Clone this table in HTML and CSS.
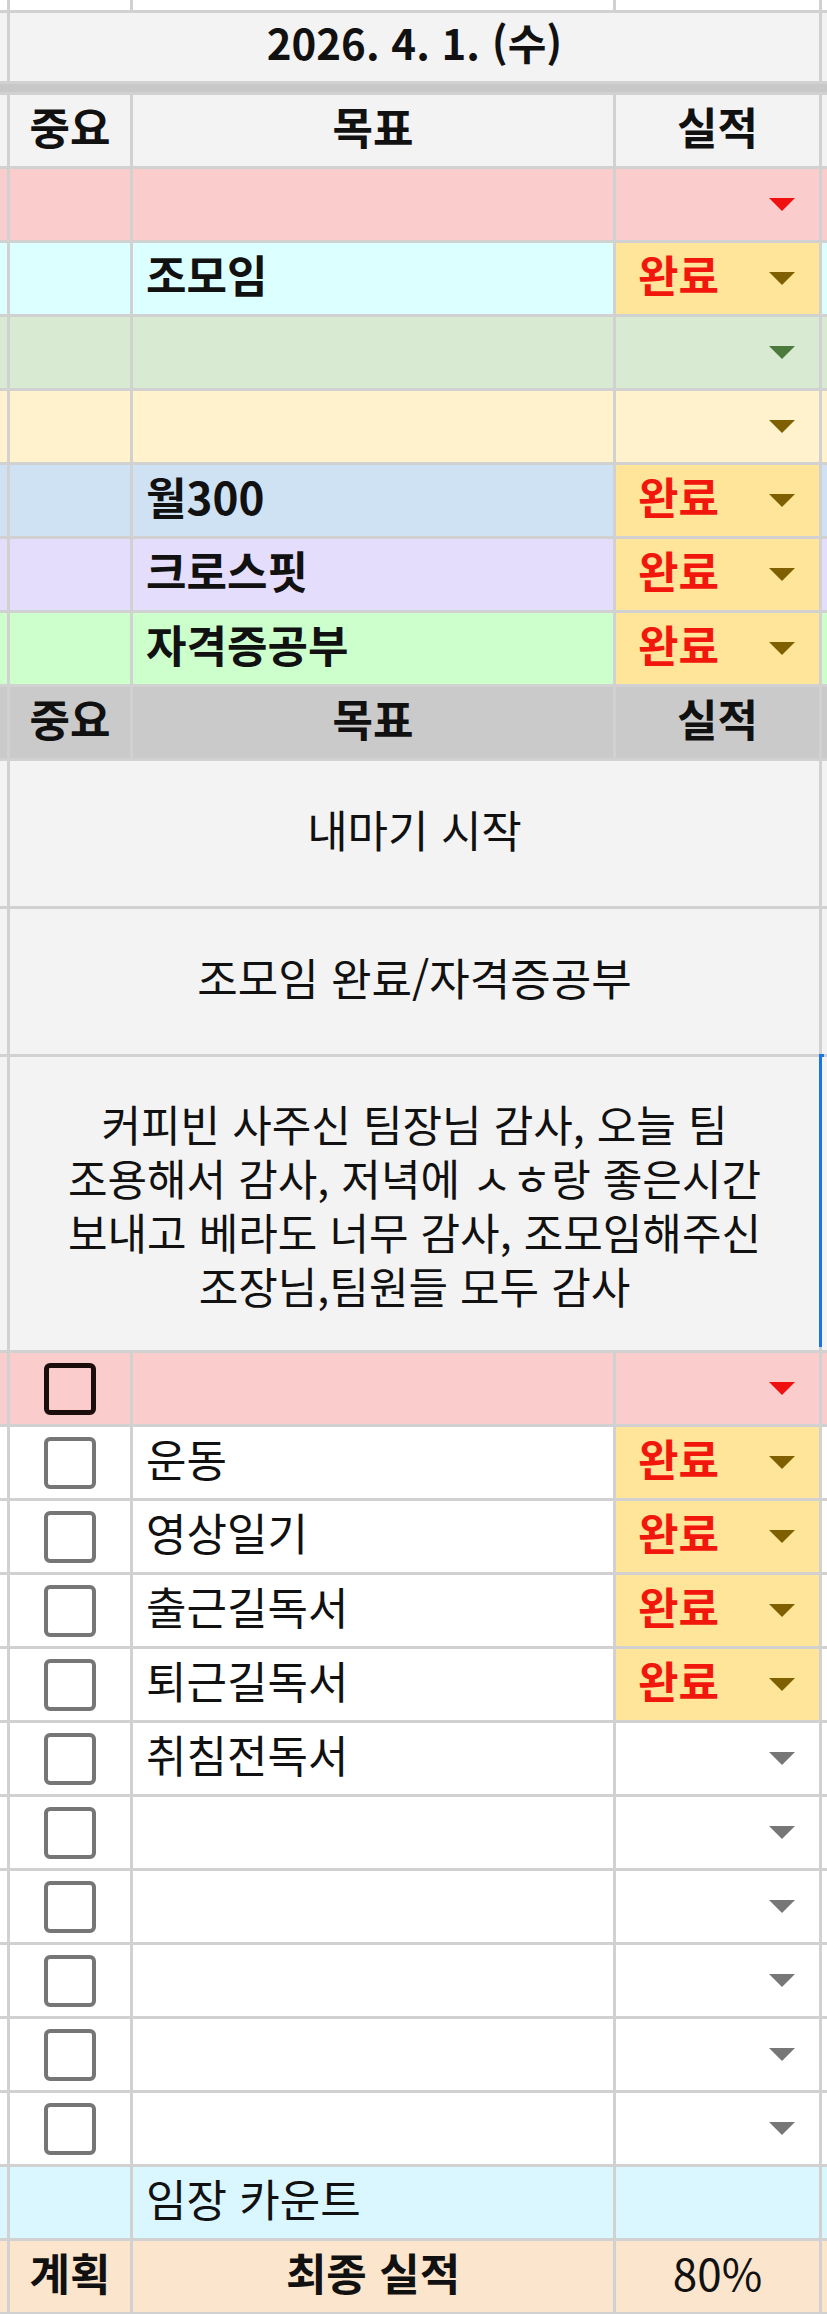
FILE: index.html
```html
<!DOCTYPE html>
<html lang="ko">
<head>
<meta charset="utf-8">
<title>2026. 4. 1. (수)</title>
<link rel="stylesheet" href="styles.css">
</head>
<body>
<div class="sheet">
  <!-- partial top row -->
  <div class="c white"></div><div class="c white"></div><div class="c white"></div><div class="c white"></div><div class="c white"></div>

  <!-- date -->
  <div class="c hd"></div>
  <div class="c hd wide ctr b t date">2026. 4. 1. (수)</div>
  <div class="c hd"></div>

  <div class="band"></div>

  <!-- header -->
  <div class="c hd"></div>
  <div class="c hd ctr b t">중요</div>
  <div class="c hd ctr b t">목표</div>
  <div class="c hd ctr b t">실적</div>
  <div class="c hd"></div>

  <!-- goal rows -->
  <div class="c pink"></div><div class="c pink"></div><div class="c pink"></div>
  <div class="c pink dd"><span class="arr red"></span></div><div class="c pink"></div>

  <div class="c cyan"></div><div class="c cyan"></div><div class="c cyan txt b t">조모임</div>
  <div class="c done dd"><span class="val">완료</span><span class="arr ylw"></span></div><div class="c cyan"></div>

  <div class="c green"></div><div class="c green"></div><div class="c green"></div>
  <div class="c green dd"><span class="arr grn"></span></div><div class="c green"></div>

  <div class="c yellow"></div><div class="c yellow"></div><div class="c yellow"></div>
  <div class="c yellow dd"><span class="arr ylw"></span></div><div class="c yellow"></div>

  <div class="c blue"></div><div class="c blue"></div><div class="c blue txt b t">월300</div>
  <div class="c done dd"><span class="val">완료</span><span class="arr ylw"></span></div><div class="c blue"></div>

  <div class="c purple"></div><div class="c purple"></div><div class="c purple txt b t">크로스핏</div>
  <div class="c done dd"><span class="val">완료</span><span class="arr ylw"></span></div><div class="c purple"></div>

  <div class="c lgreen"></div><div class="c lgreen"></div><div class="c lgreen txt b t">자격증공부</div>
  <div class="c done dd"><span class="val">완료</span><span class="arr ylw"></span></div><div class="c lgreen"></div>

  <!-- second header -->
  <div class="c gray"></div>
  <div class="c gray ctr b t">중요</div>
  <div class="c gray ctr b t">목표</div>
  <div class="c gray ctr b t">실적</div>
  <div class="c gray"></div>

  <!-- merged notes -->
  <div class="c hd span2"></div>
  <div class="c hd wide span2 ctr t">내마기 시작</div>
  <div class="c hd span2"></div>

  <div class="c hd span2"></div>
  <div class="c hd wide span2 ctr t">조모임 완료/자격증공부</div>
  <div class="c hd span2"></div>

  <div class="c hd span4"></div>
  <div class="c hd wide span4 ctr note">
    <span class="ln">커피빈 사주신 팀장님 감사, 오늘 팀</span>
    <span class="ln">조용해서 감사, 저녁에 ㅅㅎ랑 좋은시간</span>
    <span class="ln">보내고 베라도 너무 감사, 조모임해주신</span>
    <span class="ln">조장님,팀원들 모두 감사</span>
  </div>
  <div class="c hd span4 selected"></div>

  <!-- checklist -->
  <div class="c pink"></div><div class="c pink ctr"><span class="box dark"></span></div><div class="c pink"></div>
  <div class="c pink dd"><span class="arr red"></span></div><div class="c pink"></div>

  <div class="c white"></div><div class="c white ctr"><span class="box"></span></div><div class="c white txt t">운동</div>
  <div class="c done dd"><span class="val">완료</span><span class="arr ylw"></span></div><div class="c white"></div>

  <div class="c white"></div><div class="c white ctr"><span class="box"></span></div><div class="c white txt t">영상일기</div>
  <div class="c done dd"><span class="val">완료</span><span class="arr ylw"></span></div><div class="c white"></div>

  <div class="c white"></div><div class="c white ctr"><span class="box"></span></div><div class="c white txt t">출근길독서</div>
  <div class="c done dd"><span class="val">완료</span><span class="arr ylw"></span></div><div class="c white"></div>

  <div class="c white"></div><div class="c white ctr"><span class="box"></span></div><div class="c white txt t">퇴근길독서</div>
  <div class="c done dd"><span class="val">완료</span><span class="arr ylw"></span></div><div class="c white"></div>

  <div class="c white"></div><div class="c white ctr"><span class="box"></span></div><div class="c white txt t">취침전독서</div>
  <div class="c white dd"><span class="arr gry"></span></div><div class="c white"></div>

  <div class="c white"></div><div class="c white ctr"><span class="box"></span></div><div class="c white"></div>
  <div class="c white dd"><span class="arr gry"></span></div><div class="c white"></div>

  <div class="c white"></div><div class="c white ctr"><span class="box"></span></div><div class="c white"></div>
  <div class="c white dd"><span class="arr gry"></span></div><div class="c white"></div>

  <div class="c white"></div><div class="c white ctr"><span class="box"></span></div><div class="c white"></div>
  <div class="c white dd"><span class="arr gry"></span></div><div class="c white"></div>

  <div class="c white"></div><div class="c white ctr"><span class="box"></span></div><div class="c white"></div>
  <div class="c white dd"><span class="arr gry"></span></div><div class="c white"></div>

  <div class="c white"></div><div class="c white ctr"><span class="box"></span></div><div class="c white"></div>
  <div class="c white dd"><span class="arr gry"></span></div><div class="c white"></div>

  <div class="c sky"></div><div class="c sky"></div><div class="c sky txt t">임장 카운트</div>
  <div class="c sky"></div><div class="c sky"></div>

  <div class="c peach"></div>
  <div class="c peach ctr b t">계획</div>
  <div class="c peach ctr b t">최종 실적</div>
  <div class="c peach ctr t">80%</div>
  <div class="c peach"></div>

  <div class="c pink"></div><div class="c pink"></div><div class="c pink"></div><div class="c pink"></div><div class="c pink"></div>
</div>
</body>
</html>
```

FILE: styles.css
```css
html, body {
  margin: 0;
  padding: 0;
}

body {
  background: #d1d1d1;
  font-family: "Noto Sans CJK KR", "Noto Sans", sans-serif;
  color: #111;
}

.sheet {
  width: 827px;
  height: 2314px;
  overflow: hidden;
  display: grid;
  grid-template-columns: 7px 120px 480px 203px 5px;
  grid-template-rows: 10px 68px 8px;
  grid-auto-rows: 71px;
  gap: 3px;
  background: #d1d1d1;
}

.c {
  display: flex;
  align-items: center;
  font-size: 44px;
  line-height: 1;
  white-space: nowrap;
  min-width: 0;
}

.b { font-weight: 700; }
.ctr { justify-content: center; text-align: center; }
.txt { padding-left: 13px; }
.t { padding-bottom: 10px; box-sizing: border-box; }
.date { font-size: 42px; }

.wide { grid-column: 2 / 5; }
.span2 { grid-row: span 2; }
.span4 { grid-row: span 4; }

.band {
  grid-column: 1 / -1;
  background: #c8c8c8;
}

/* colours */
.white  { background: #ffffff; }
.hd     { background: #f3f3f3; }
.gray   { background: #cacaca; }
.pink   { background: #fbcccc; }
.cyan   { background: #dcffff; }
.green  { background: #d9ead3; }
.yellow { background: #fff2cc; }
.blue   { background: #cfe2f3; }
.purple { background: #e4ddfb; }
.lgreen { background: #ccffcc; }
.sky    { background: #daf6ff; }
.peach  { background: #fce5cd; }
.done   { background: #ffe599; }

/* dropdown cell */
.dd {
  justify-content: flex-end;
  padding: 0 24px 0 22px;
}
.dd .val {
  margin-right: auto;
  margin-bottom: 10px;
  color: #f2170d;
  font-weight: 700;
}
.arr {
  width: 0;
  height: 0;
  border-left: 13px solid transparent;
  border-right: 13px solid transparent;
  border-top: 13px solid #777;
}
.arr.red { border-top-color: #f01010; }
.arr.ylw { border-top-color: #7f6000; }
.arr.grn { border-top-color: #4b7a3c; }
.arr.gry { border-top-color: #777777; }

/* checkbox */
.box {
  width: 52px;
  height: 52px;
  box-sizing: border-box;
  border: 4px solid #767676;
  border-radius: 6px;
}
.box.dark {
  border: 5px solid #1c0d0d;
}

/* long note */
.note {
  flex-direction: column;
  justify-content: center;
  font-size: 43px;
}
.ln {
  display: block;
  line-height: 54px;
  white-space: nowrap;
}

.selected {
  box-shadow: -3px -3px 0 0 #1a73e8;
}
```
